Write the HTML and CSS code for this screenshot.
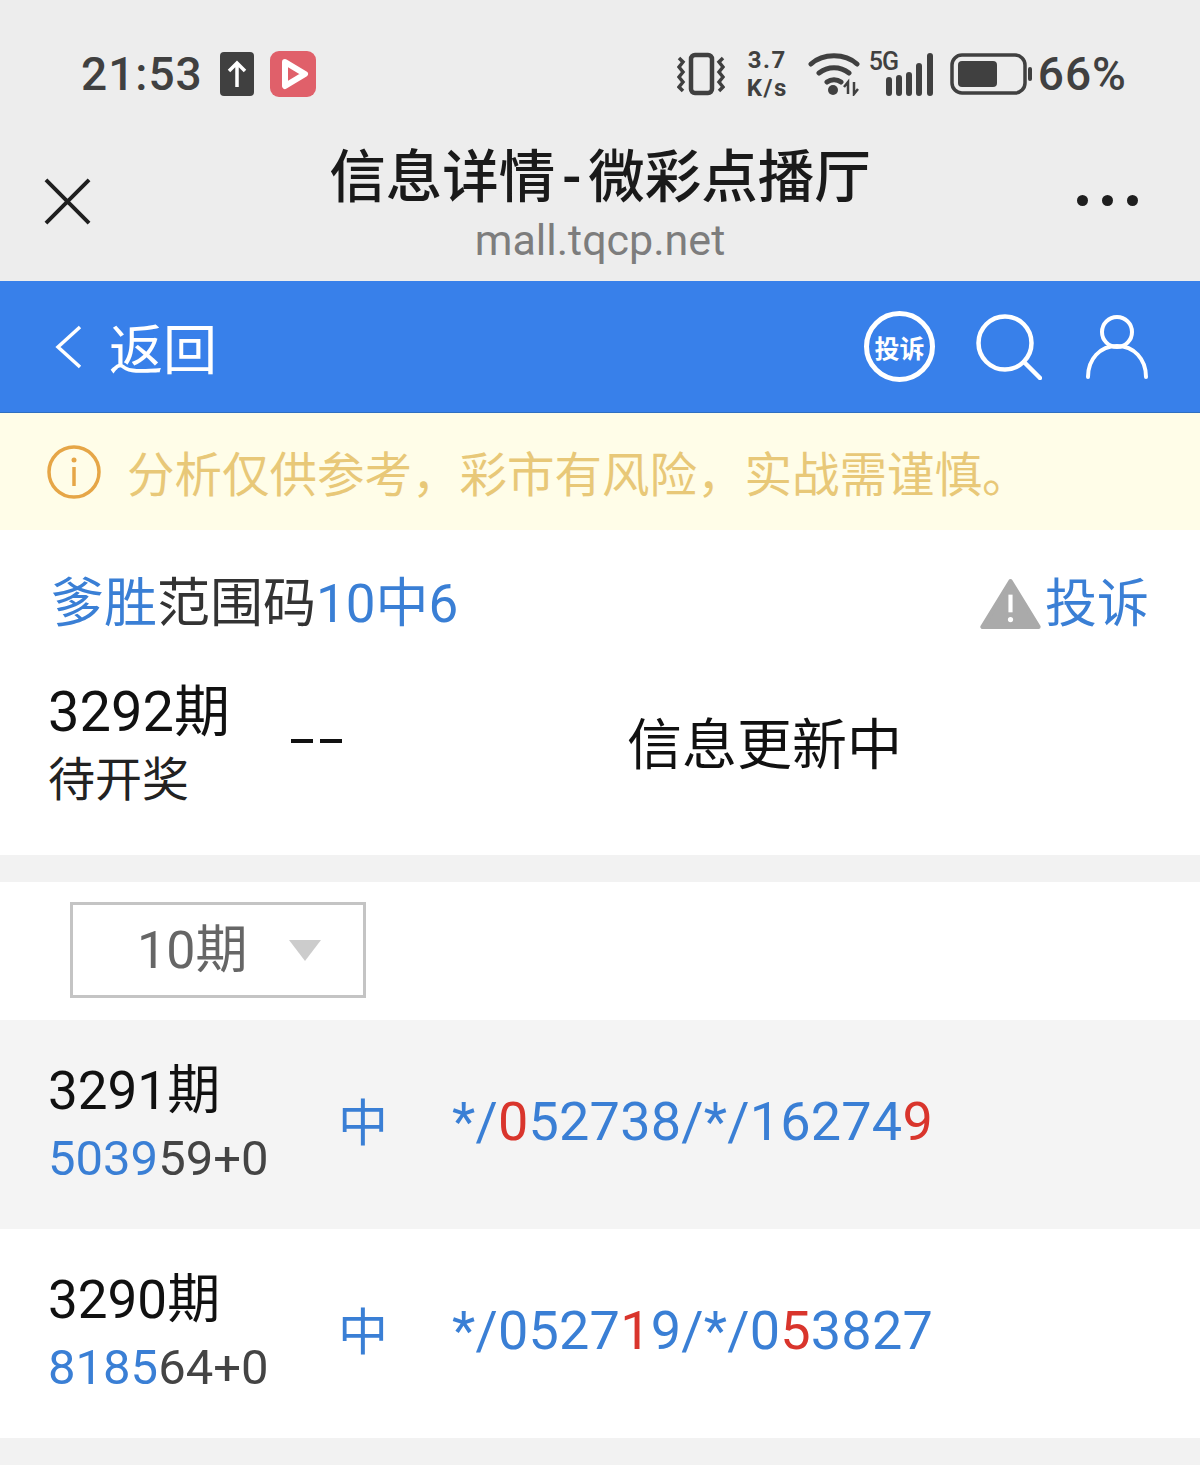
FILE: index.html
```html
<!DOCTYPE html>
<html lang="zh-CN">
<head>
<meta charset="UTF-8">
<meta name="viewport" content="width=device-width, initial-scale=1.0">
<title>信息详情-微彩点播厅</title>
<link rel="stylesheet" href="styles.css">
</head>
<body>
<div class="app-head">
  <div class="status-bar">
    <div class="status-left">
      <span class="clock">21:53</span>
      <svg class="ico-upload" viewBox="0 0 34 44"><rect width="34" height="44" rx="4" fill="#404040"/><path d="M17 35V11M9 19l8-8 8 8" fill="none" stroke="#fff" stroke-width="3.5"/></svg>
      <svg class="ico-play" viewBox="0 0 46 46"><rect width="46" height="46" rx="9" fill="#e0606a"/><path d="M15 11l20 12-20 12z" fill="none" stroke="#fff" stroke-width="6" stroke-linejoin="round"/></svg>
    </div>
    <div class="status-right">
      <svg class="ico-vibrate" viewBox="0 0 48 44"><rect x="14" y="3" width="21" height="38" rx="4" fill="none" stroke="#404040" stroke-width="4.5"/><path d="M2 6l4 4-4 5 4 5-4 5 4 5-4 5 4 4M46 6l-4 4 4 5-4 5 4 5-4 5 4 5-4 4" fill="none" stroke="#404040" stroke-width="3.5"/></svg>
      <div class="net-speed">3.7<br>K/s</div>
      <svg class="ico-wifi" viewBox="0 0 52 44"><path d="M3 12C15 1 37 1 49 12M11 21c9-7 21-7 30 0M19 30c4-3 10-3 14 0" fill="none" stroke="#404040" stroke-width="5" stroke-linecap="round"/><circle cx="25" cy="38" r="5" fill="#404040"/><path d="M40 42V30l-4 5M46 30v12l4-5" fill="none" stroke="#404040" stroke-width="2.5"/></svg>
      <div class="signal">
        <span class="signal-label">5G</span>
        <svg class="ico-bars" viewBox="0 0 48 44"><path d="M3 41V28M13 41V26M23 41V23M33 41V14M44 41V4" stroke="#404040" stroke-width="6" stroke-linecap="round"/></svg>
      </div>
      <svg class="ico-battery" viewBox="0 0 82 44"><rect x="2" y="3" width="73" height="38" rx="10" fill="none" stroke="#404040" stroke-width="3.5"/><rect x="8" y="9" width="39" height="26" rx="4" fill="#404040"/><rect x="78" y="15" width="4" height="14" rx="2" fill="#404040"/></svg>
      <span class="battery-pct">66%</span>
    </div>
  </div>
  <div class="title-bar">
    <svg class="ico-close" viewBox="0 0 48 48"><path d="M2 2l44 44M46 2L2 46" stroke="#1f1f1f" stroke-width="4"/></svg>
    <div class="title-text">
      <div class="title-main">信息详情<span class="title-dash">-</span>微彩点播厅</div>
      <div class="title-url">mall.tqcp.net</div>
    </div>
    <div class="more-dots"><i></i><i></i><i></i></div>
  </div>
</div>

<div class="nav-bar">
  <div class="nav-back">
    <svg class="ico-back" viewBox="0 0 28 44"><path d="M25 2L3 22l22 20" fill="none" stroke="#fff" stroke-width="3.5"/></svg>
    <span>返回</span>
  </div>
  <div class="nav-icons">
    <div class="badge-report">投诉</div>
    <svg class="ico-search" viewBox="0 0 66 66"><circle cx="29" cy="29" r="26.5" fill="none" stroke="#fff" stroke-width="4.5"/><path d="M48 48l16 16" stroke="#fff" stroke-width="4.5" stroke-linecap="round"/></svg>
    <svg class="ico-user" viewBox="0 0 62 64"><circle cx="31" cy="17" r="15" fill="none" stroke="#fff" stroke-width="4"/><path d="M2 62c0-18 12-31 29-31s29 13 29 31" fill="none" stroke="#fff" stroke-width="4" stroke-linecap="round"/></svg>
  </div>
</div>

<div class="notice">
  <svg class="ico-info" viewBox="0 0 54 54"><circle cx="27" cy="27" r="25" fill="none" stroke="#e6a647" stroke-width="3.5"/><circle cx="27" cy="15" r="2.5" fill="#e6a647"/><path d="M27 22v19" stroke="#e6a647" stroke-width="3.5"/></svg>
  <span>分析仅供参考，彩市有风险，实战需谨慎。</span>
</div>

<section class="summary">
  <div class="summary-head">
    <div class="summary-title"><span class="blue">爹胜</span>范围码<span class="blue">10中6</span></div>
    <div class="report-link">
      <svg class="ico-warn" viewBox="0 0 60 50"><path d="M30 3L3 47h54z" fill="#aaa" stroke="#aaa" stroke-width="4" stroke-linejoin="round"/><path d="M30 16v17" stroke="#fff" stroke-width="4"/><circle cx="30" cy="40" r="2.5" fill="#fff"/></svg>
      <span>投诉</span>
    </div>
  </div>
  <div class="summary-body">
    <div class="current-issue">
      <div class="issue-no">3292期</div>
      <div class="issue-state">待开奖</div>
    </div>
    <div class="current-dash"><i></i><i></i></div>
    <div class="current-msg">信息更新中</div>
  </div>
</section>

<section class="filter">
  <div class="filter-select">
    <span>10期</span>
    <i class="caret"></i>
  </div>
</section>

<div class="record record-alt">
  <div class="record-left">
    <div class="record-no">3291期</div>
    <div class="record-draw"><span class="blue">5039</span>59+0</div>
  </div>
  <div class="record-hit">中</div>
  <div class="record-codes">*/<span class="red">0</span>52738/*/16274<span class="red">9</span></div>
</div>
<div class="record">
  <div class="record-left">
    <div class="record-no">3290期</div>
    <div class="record-draw"><span class="blue">8185</span>64+0</div>
  </div>
  <div class="record-hit">中</div>
  <div class="record-codes">*/0527<span class="red">1</span>9/*/0<span class="red">5</span>3827</div>
</div>
<div class="page-tail"></div>
</body>
</html>
```

FILE: styles.css
```css
:root {
  --blue: #3a7fd5;
  --nav-blue: #3880ea;
  --text: #111;
  --status: #404040;
  --cjk: Roboto, "Noto Sans CJK SC", sans-serif;
}

html, body {
  margin: 0;
  padding: 0;
  height: 1465px;
  overflow: hidden;
}

body {
  font-family: var(--cjk);
  color: var(--text);
  background: #f2f2f2;
}

.blue { color: var(--blue); }
.red { color: #d9352c; }

/* top browser chrome */
.app-head {
  height: 281px;
  background: #ededed;
  display: flex;
  flex-direction: column;
}

.status-bar {
  height: 132px;
  padding: 15px 73px 0 81px;
  box-sizing: border-box;
  display: flex;
  justify-content: space-between;
  align-items: center;
}

.status-left, .status-right {
  display: flex;
  align-items: center;
}

.clock {
  font-size: 46px;
  font-weight: 500;
  color: var(--status);
  letter-spacing: 1px;
  margin-right: 17px;
}

.ico-upload { width: 34px; height: 44px; margin-right: 16px; }
.ico-play { width: 46px; height: 46px; }
.ico-vibrate { width: 48px; height: 44px; }

.net-speed {
  width: 43px;
  margin: 0 19px 0 21px;
  font-size: 24px;
  line-height: 28px;
  font-weight: 700;
  letter-spacing: 1.5px;
  text-align: center;
  white-space: nowrap;
  color: var(--status);
}

.ico-wifi { width: 52px; height: 44px; }

.signal {
  position: relative;
  width: 63px;
  height: 44px;
  margin: 0 16px 0 11px;
  display: flex;
  justify-content: flex-end;
}

.signal-label {
  position: absolute;
  left: -2px;
  top: -5px;
  font-size: 25px;
  font-weight: 500;
  letter-spacing: -1px;
  color: var(--status);
}

.ico-bars { width: 48px; height: 44px; }
.ico-battery { width: 82px; height: 44px; margin-right: 6px; }

.battery-pct {
  font-size: 46px;
  font-weight: 500;
  letter-spacing: 1px;
  color: var(--status);
}

.title-bar {
  flex: 1;
  display: flex;
  align-items: flex-start;
  position: relative;
  justify-content: center;
}

.ico-close {
  position: absolute;
  left: 44px;
  top: 46px;
  width: 47px;
  height: 47px;
}

.title-text { text-align: center; margin-top: 12px; }

.title-main {
  font-size: 56.5px;
  font-weight: 500;
  line-height: 68px;
  color: #1a1a1a;
}

.title-dash { padding: 0 7px; }

.title-url {
  font-size: 43px;
  line-height: 56px;
  color: #7d7d7d;
}

.more-dots {
  position: absolute;
  right: 62px;
  top: 63px;
  display: flex;
  gap: 14px;
}

.more-dots i {
  width: 11px;
  height: 11px;
  border-radius: 50%;
  background: #1f1f1f;
}

/* blue page nav */
.nav-bar {
  height: 131px;
  background: var(--nav-blue);
  border-bottom: 1px solid #2f6fc0;
  display: flex;
  justify-content: space-between;
  align-items: center;
  padding: 0 52px 0 55px;
  color: #fff;
}

.nav-back {
  display: flex;
  align-items: center;
  gap: 26px;
  font-size: 54px;
}

.ico-back { width: 28px; height: 44px; }

.nav-icons {
  display: flex;
  align-items: center;
  gap: 41px;
}

.nav-icons .ico-user { margin-left: 3px; }

.badge-report {
  width: 71px;
  height: 71px;
  box-sizing: border-box;
  border: 5px solid #fff;
  border-radius: 50%;
  display: flex;
  align-items: center;
  justify-content: center;
  font-size: 25px;
  font-weight: 700;
  white-space: nowrap;
}

.ico-search { width: 66px; height: 66px; }
.ico-user { width: 62px; height: 64px; }

/* notice strip */
.notice {
  height: 117px;
  background: #fffde8;
  display: flex;
  align-items: center;
  padding-left: 47px;
  gap: 26px;
  font-size: 47.5px;
  color: #e8c878;
}

.ico-info { width: 54px; height: 54px; }

/* current issue */
.summary {
  height: 325px;
  background: #fff;
  padding: 0 51px;
  box-sizing: border-box;
}

.summary-head {
  display: flex;
  justify-content: space-between;
  align-items: center;
  height: 138px;
  margin-bottom: 11px;
}

.summary-title {
  font-size: 53px;
  color: #333;
}

.report-link {
  display: flex;
  align-items: center;
  gap: 3px;
  font-size: 52px;
  color: var(--blue);
}

.ico-warn { width: 63px; height: 52px; margin-top: 10px; }

.summary-body {
  display: flex;
  align-items: center;
}

.current-issue { width: 243px; margin-left: -3px; }

.issue-no {
  font-size: 56px;
  line-height: 66px;
}

.issue-state {
  font-size: 47px;
  line-height: 70px;
  color: #222;
}

.current-dash {
  width: 336px;
  height: 4px;
  margin-bottom: 12px;
  display: flex;
  gap: 7px;
}

.current-dash i {
  width: 22px;
  height: 4px;
  background: #111;
}

.current-msg {
  font-size: 55px;
  margin-bottom: 14px;
}

/* filter */
.filter {
  margin-top: 27px;
  height: 138px;
  background: #fff;
  padding: 20px 0 0 70px;
  box-sizing: border-box;
}

.filter-select {
  width: 296px;
  height: 96px;
  box-sizing: border-box;
  border: 3px solid #c4c4c4;
  display: flex;
  align-items: center;
  padding-left: 64px;
  gap: 42px;
  font-size: 52px;
  line-height: 60px;
  color: #666;
}

.filter-select span { margin-top: 2px; }

.caret {
  width: 0;
  height: 0;
  border-left: 16px solid transparent;
  border-right: 16px solid transparent;
  border-top: 21px solid #ccc;
}

/* history rows */
.record {
  height: 209px;
  background: #fff;
  display: flex;
  align-items: center;
  padding-left: 48px;
  box-sizing: border-box;
}

.record-alt { background: #f4f4f4; }

.record-left { width: 290px; }

.record-no {
  font-size: 53px;
  line-height: 68px;
}

.record-draw {
  font-size: 49px;
  line-height: 68px;
  color: #444;
}

.record-hit {
  width: 114px;
  font-size: 50px;
  margin-bottom: 12px;
  color: var(--blue);
}

.record-codes {
  font-size: 54px;
  margin-bottom: 6px;
  letter-spacing: 0.2px;
  color: var(--blue);
}

.page-tail { height: 27px; background: #f2f2f2; }
```
